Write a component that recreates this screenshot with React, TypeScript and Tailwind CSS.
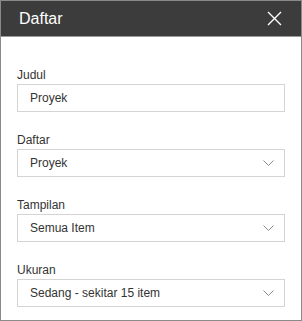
import { useState } from 'react';

interface Field {
  label: string;
  value: string;
  kind: 'text' | 'select';
}

const fields: Field[] = [
  { label: 'Judul', value: 'Proyek', kind: 'text' },
  { label: 'Daftar', value: 'Proyek', kind: 'select' },
  { label: 'Tampilan', value: 'Semua Item', kind: 'select' },
  { label: 'Ukuran', value: 'Sedang - sekitar 15 item', kind: 'select' },
];

function Chevron() {
  return (
    <svg width="11" height="6" viewBox="0 0 11 6" fill="none" className="shrink-0">
      <path d="M0.5 0.5 L5.5 5.5 L10.5 0.5" stroke="#8a8a8a" strokeWidth="1" />
    </svg>
  );
}

export default function App() {
  const [title, setTitle] = useState('Proyek');

  return (
    <div
      className="w-[302px] h-[321px] bg-white border border-[#8a8a8a] flex flex-col text-[#333333]"
      style={{ fontFamily: '"Segoe UI", "Liberation Sans", Arial, sans-serif' }}
    >
      <div className="h-[35px] bg-[#3c3c3c] border-b border-[#9a9a9a] flex items-center justify-between pl-[18px] pr-[19px] shrink-0 box-content">
        <h1 className="text-white text-[16px] leading-none">Daftar</h1>
        <button className="w-[16px] h-[16px] flex items-center justify-center">
          <svg width="15" height="15" viewBox="0 0 15 15" fill="none">
            <path d="M1 1 L14 14 M14 1 L1 14" stroke="#ffffff" strokeWidth="1.4" />
          </svg>
        </button>
      </div>

      <div className="flex flex-col gap-[19px] px-4 pt-[29px]">
        {fields.map((f) => (
          <div key={f.label}>
            <p className="text-[12px] leading-[18px]">{f.label}</p>
            {f.kind === 'text' ? (
              <input
                value={title}
                onChange={(e) => setTitle(e.target.value)}
                className="w-full h-[28px] border border-[#d4d4d4] px-3 text-[12px] text-[#333333] outline-none"
              />
            ) : (
              <div className="w-full h-[28px] border border-[#d4d4d4] pl-3 pr-[10px] flex items-center justify-between text-[12px]">
                <span>{f.value}</span>
                <Chevron />
              </div>
            )}
          </div>
        ))}
      </div>
    </div>
  );
}
